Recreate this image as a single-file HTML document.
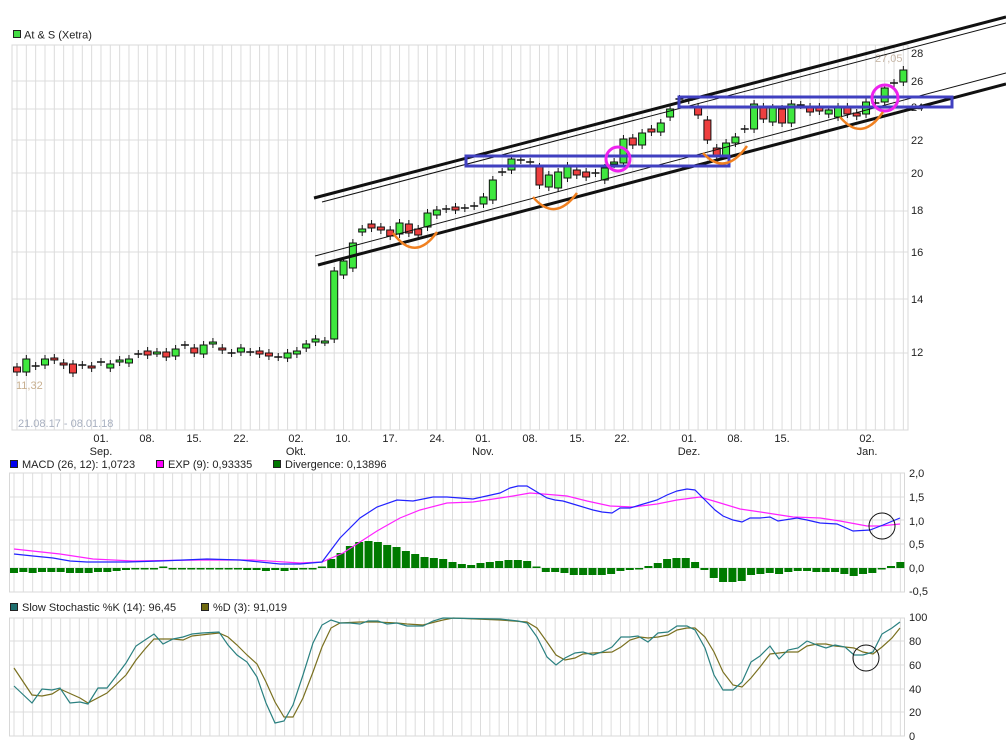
<!DOCTYPE html>
<html><head><meta charset="utf-8">
<style>
html,body{margin:0;padding:0;background:#fff;width:1006px;height:743px;overflow:hidden}
svg{display:block}
text{font-family:"Liberation Sans",sans-serif;font-size:11px;fill:#222}
</style></head>
<body>
<svg id="s" width="1006" height="743" xmlns="http://www.w3.org/2000/svg"></svg>
<script>
var S=document.getElementById('s');var o='';
function X(i){return 17+i*9.33;}
// legends
o+='<rect x="13.5" y="30.5" width="7" height="7" fill="#44dd44" stroke="#222"/><text x="24" y="38.5">At &amp; S (Xetra)</text>';
// main grid
o+='<rect x="12" y="45" width="896" height="385" fill="#fff" stroke="#d8d8d8"/>';
for(var i=0;i<96;i++){o+='<line x1="'+X(i)+'" y1="45" x2="'+X(i)+'" y2="430" stroke="#dcdcdc"/>';}
[81,109,140,173,211,252,299,353].forEach(function(y){o+='<line x1="12" y1="'+y+'" x2="908" y2="'+y+'" stroke="#dcdcdc"/>';});
[[28,57],[26,85],[24,111],[22,144],[20,177],[18,214],[16,256],[14,303],[12,356]].forEach(function(a){o+='<text x="911" y="'+a[1]+'">'+a[0]+'</text>';});
var C=[[367,372,'r'],[359,372,'g'],[366,366,'d'],[359,365,'g'],[358,360,'r'],[363,365,'r'],[364,373,'r'],[365,365,'d'],[366,368,'r'],[362,362,'d'],[364,368,'g'],[360,362,'g'],[359,363,'g'],[354,354,'d'],[351,355,'r'],[352,353,'g'],[352,357,'r'],[349,356,'g'],[345,345,'d'],[348,353,'r'],[345,354,'g'],[342,344,'g'],[348,350,'r'],[353,353,'d'],[348,352,'g'],[352,352,'d'],[351,354,'r'],[353,356,'r'],[357,357,'d'],[353,358,'g'],[351,354,'g'],[344,348,'g'],[339,342,'g'],[341,342,'g'],[271,339,'g'],[261,275,'g'],[243,268,'g'],[229,232,'g'],[224,228,'r'],[227,230,'r'],[230,236,'r'],[223,234,'g'],[224,233,'r'],[229,235,'r'],[213,227,'g'],[210,215,'g'],[209,209,'d'],[207,210,'r'],[208,208,'d'],[206,206,'d'],[197,204,'g'],[180,200,'g'],[172,172,'d'],[159,170,'g'],[160,160,'d'],[162,162,'d'],[167,185,'r'],[175,187,'g'],[172,188,'g'],[166,178,'g'],[170,175,'r'],[172,177,'r'],[173,173,'d'],[168,180,'g'],[162,164,'g'],[139,163,'g'],[138,145,'r'],[133,145,'g'],[129,132,'r'],[123,132,'g'],[109,117,'g'],[99,99,'d'],[100,100,'d'],[107,115,'r'],[120,140,'r'],[148,155,'r'],[143,155,'g'],[137,143,'g'],[129,129,'d'],[104,129,'g'],[107,119,'r'],[108,122,'g'],[109,123,'r'],[104,123,'g'],[105,105,'d'],[107,112,'r'],[107,111,'r'],[110,114,'g'],[107,117,'g'],[107,114,'r'],[113,116,'r'],[102,114,'g'],[103,103,'d'],[88,102,'g'],[83,83,'d'],[70,82,'g']];
C.forEach(function(c,i){var x=X(i);var hi=c[0]-4,lo=c[1]+4;if(i==95)hi=66;
o+='<line x1="'+x+'" y1="'+hi+'" x2="'+x+'" y2="'+lo+'" stroke="#111"/>';
if(c[2]=='d'){o+='<line x1="'+(x-4)+'" y1="'+c[0]+'" x2="'+(x+4)+'" y2="'+c[0]+'" stroke="#111" stroke-width="1.5"/>';}
else{o+='<rect x="'+(x-3.5)+'" y="'+c[0]+'" width="7" height="'+Math.max(2,c[1]-c[0])+'" fill="'+(c[2]=='g'?'#3fe83f':'#ee3f3f')+'" stroke="#111"/>';}
});
o+='<text x="875" y="62" style="fill:#c8b8a8">27,05</text>';
o+='<text x="16" y="389" style="fill:#c8b090">11,32</text>';
o+='<text x="18" y="427" style="fill:#a8b0c0">21.08.17 - 08.01.18</text>';
// trend lines
o+='<line x1="314" y1="198" x2="1006" y2="17" stroke="#111" stroke-width="3"/>';
o+='<line x1="322" y1="202" x2="1006" y2="23" stroke="#111" stroke-width="1"/>';
o+='<line x1="318" y1="265" x2="1006" y2="84" stroke="#111" stroke-width="3"/>';
o+='<line x1="315" y1="256" x2="1006" y2="73" stroke="#111" stroke-width="1"/>';
o+='<rect x="466" y="156" width="263" height="10" fill="none" stroke="#4040c0" stroke-width="3"/>';
o+='<rect x="679" y="97" width="273" height="10" fill="none" stroke="#4040c0" stroke-width="3"/>';
o+='<circle cx="618" cy="159" r="12" fill="none" stroke="#ee22ee" stroke-width="3"/>';
o+='<circle cx="885" cy="98" r="13" fill="none" stroke="#ee22ee" stroke-width="3"/>';
['M393,233 Q415,263 437,232','M533,197 Q555,223 577,193','M703,153 Q725,177 747,146','M840,117 Q862,143 883,112'].forEach(function(d){o+='<path d="'+d+'" fill="none" stroke="#f08020" stroke-width="2.5"/>';});
// x labels
[['01.','Sep.',101],['08.','',147],['15.','',194],['22.','',241],['02.','Okt.',296],['10.','',343],['17.','',390],['24.','',437],['01.','Nov.',483],['08.','',530],['15.','',577],['22.','',622],['01.','Dez.',689],['08.','',735],['15.','',782],['02.','Jan.',867]].forEach(function(a){o+='<text x="'+a[2]+'" y="442" text-anchor="middle">'+a[0]+'</text>';if(a[1])o+='<text x="'+a[2]+'" y="455" text-anchor="middle">'+a[1]+'</text>';});
// MACD panel
o+='<rect x="10.5" y="460.5" width="7" height="7" fill="#0000ee" stroke="#222"/><text x="22" y="468">MACD (26, 12): 1,0723</text>';
o+='<rect x="156.5" y="460.5" width="7" height="7" fill="#ff00ff" stroke="#222"/><text x="168" y="468">EXP (9): 0,93335</text>';
o+='<rect x="273.5" y="460.5" width="7" height="7" fill="#007700" stroke="#222"/><text x="285" y="468">Divergence: 0,13896</text>';
function panel(t,b,hs){o+='<rect x="9.5" y="'+t+'" width="895" height="'+(b-t)+'" fill="#fff" stroke="#d8d8d8"/>';for(var i=0;i<96;i++){o+='<line x1="'+(X(i)-3)+'" y1="'+t+'" x2="'+(X(i)-3)+'" y2="'+b+'" stroke="#dcdcdc"/>';}hs.forEach(function(y){o+='<line x1="9.5" y1="'+y+'" x2="904.5" y2="'+y+'" stroke="#dcdcdc"/>';});}
panel(473,592,[497,520,544,568]);
[['2,0',477],['1,5',501],['1,0',525],['0,5',548],['0,0',572],['-0,5',595]].forEach(function(a){o+='<text x="909" y="'+a[1]+'">'+a[0]+'</text>';});
var D=[-5,-4,-5,-4,-4,-4,-5,-5,-5,-4,-4,-3,-2,-1,-1,-1,0,-1,-1,-1,-1,-1,-1,-1,-1,-2,-2,-3,-2,-3,-2,-1,-1,1,9,15,22,26,27,26,23,21,17,14,11,10,9,6,4,3,5,6,7,8,8,7,0,-4,-4,-5,-7,-7,-7,-7,-6,-3,-2,-1,2,5,9,10,10,6,-2,-10,-14,-14,-13,-7,-6,-5,-6,-4,-3,-3,-4,-4,-4,-6,-8,-6,-5,-1,2,6];
D.forEach(function(v,i){var x=X(i)-3;var h=Math.max(1.5,Math.abs(v));var y=v>=0?568-h:568;o+='<rect x="'+(x-4)+'" y="'+y+'" width="8" height="'+h+'" fill="#007a00"/>';});
o+='<polyline fill="none" stroke="#ff22ff" stroke-width="1.2" points="14,549 60,554 93,559 133,561 200,560 253,560 300,563 322,562 343,553 360,542 377,531 400,518 420,510 447,503 473,502 500,498 513,496 530,493 543,494 567,496 587,501 610,506 633,507 657,504 677,500 700,497 717,502 740,509 767,513 793,517 820,518 840,521 867,526 880,526 900,524"/>';
o+='<polyline fill="none" stroke="#2222ff" stroke-width="1.2" points="14,554 33,556 53,558 70,561 87,562 127,562 160,561 207,559 240,560 280,564 300,564 322,562 340,538 360,518 377,507 397,500 413,501 433,497 447,497 473,499 500,493 510,488 518,486 527,486 537,492 547,498 555,500 563,501 573,504 593,510 602,512 612,513 620,508 630,508 640,505 657,500 667,495 677,491 687,489 695,490 705,500 715,510 723,516 733,520 742,522 750,518 760,518 770,517 778,521 797,518 807,520 820,523 837,524 853,531 870,530 883,525 900,518"/>';
o+='<circle cx="882" cy="526" r="13" fill="none" stroke="#111"/>';
// Stoch panel
o+='<rect x="10.5" y="603.5" width="7" height="7" fill="#1f6f6f" stroke="#222"/><text x="22" y="611">Slow Stochastic %K (14): 96,45</text>';
o+='<rect x="201.5" y="603.5" width="7" height="7" fill="#6f6a10" stroke="#222"/><text x="213" y="611">%D (3): 91,019</text>';
panel(618,736,[641,665,689,712]);
[['100',621],['80',645],['60',669],['40',693],['20',716],['0',740]].forEach(function(a){o+='<text x="909" y="'+a[1]+'">'+a[0]+'</text>';});
o+='<polyline fill="none" stroke="#7a7020" stroke-width="1.2" points="14,668 32,695 42,696 52,694 60,689 80,698 88,703 107,693 126,675 136,660 145,649 154,639 173,639 183,640 192,636 219,633 228,637 237,645 247,655 257,664 266,682 275,702 284,717 293,717 303,698 313,672 322,647 331,628 340,623 360,622 377,622 397,623 407,624 423,625 443,620 453,618 500,620 527,622 537,628 547,642 556,655 565,660 575,658 583,654 593,653 612,652 621,647 630,640 640,637 648,638 658,637 668,635 677,630 687,628 695,628 705,637 714,652 723,672 733,685 742,687 751,678 760,667 770,654 779,653 788,652 798,652 807,646 817,644 826,644 835,646 845,647 854,648 863,652 873,654 882,647 892,638 900,628"/>';
o+='<polyline fill="none" stroke="#2a8080" stroke-width="1.2" points="14,686 32,703 42,689 52,690 60,688 70,703 80,702 88,704 98,688 107,688 117,675 126,663 136,646 145,640 154,634 163,644 173,639 183,637 192,634 202,633 219,632 228,645 237,655 247,662 257,677 266,703 275,723 284,721 293,705 303,675 313,643 322,625 331,620 340,623 350,623 360,624 368,621 378,621 387,624 397,623 407,626 423,626 433,621 443,618 500,619 518,621 527,623 537,637 547,657 556,665 565,658 575,653 583,652 593,655 602,652 612,647 621,637 630,637 638,636 648,642 658,633 668,632 677,626 687,626 695,630 705,648 714,675 723,690 733,690 742,682 751,662 760,656 770,646 779,659 788,650 798,648 807,641 817,645 826,648 835,645 845,647 854,655 863,655 873,652 882,634 892,628 900,622"/>';
o+='<circle cx="866" cy="658" r="13" fill="none" stroke="#111"/>';
S.innerHTML=o;
</script>
</body></html>
